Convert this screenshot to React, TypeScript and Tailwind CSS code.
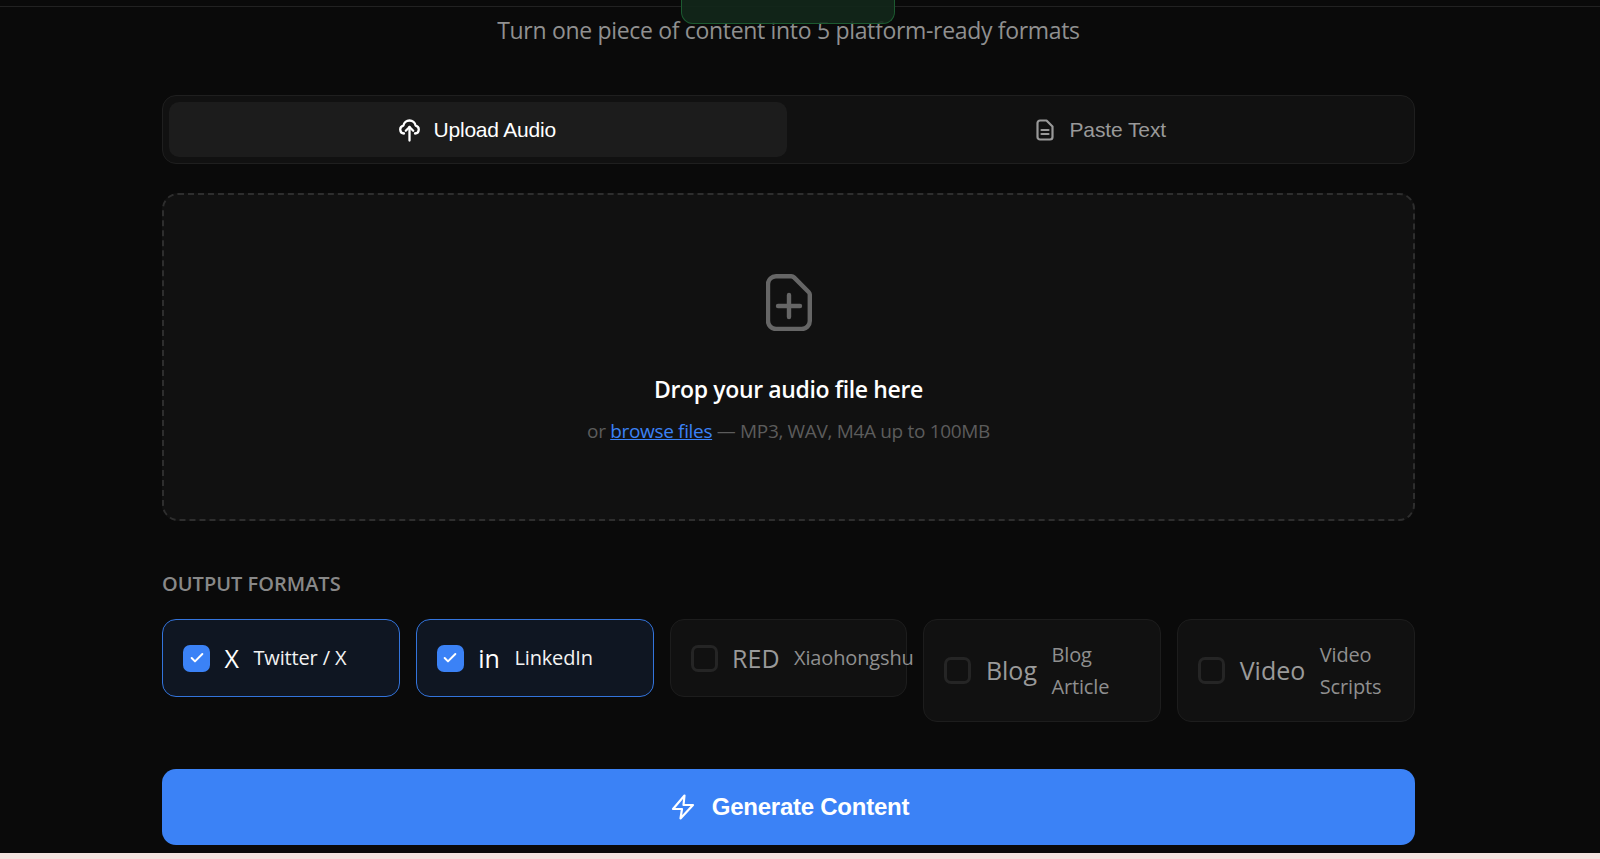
import { Check } from "lucide-react";

const sans = "font-['Open_Sans','Noto_Sans',sans-serif]";
const arial = "font-['Liberation_Sans',Arial,sans-serif]";

type Format = { short: string; name: string; on: boolean };

const formats: Format[] = [
  { short: "X", name: "Twitter / X", on: true },
  { short: "in", name: "LinkedIn", on: true },
  { short: "RED", name: "Xiaohongshu", on: false },
  { short: "Blog", name: "Blog\nArticle", on: false },
  { short: "Video", name: "Video\nScripts", on: false },
];

function UploadIcon() {
  return (
    <svg width="21" height="24" viewBox="0 0 21 24" fill="none" stroke="#fff" strokeWidth="2.3" strokeLinecap="round" strokeLinejoin="round">
      <path d="M5 15.5a4 4 0 0 1-.6-7.9 6.2 6.2 0 0 1 12.2 0A4 4 0 0 1 16 15.5" />
      <path d="M10.5 22.5V9" />
      <path d="M6.8 12.7l3.7-3.7 3.7 3.7" />
    </svg>
  );
}

function PasteIcon() {
  return (
    <svg width="18" height="22" viewBox="0 0 18 22" fill="none" stroke="#999" strokeWidth="2.2" strokeLinecap="round" strokeLinejoin="round">
      <path d="M4 1.5h6.5L16.5 7.5V18a2.5 2.5 0 0 1-2.5 2.5H4A2.5 2.5 0 0 1 1.5 18V4A2.5 2.5 0 0 1 4 1.5Z" />
      <path d="M5.5 11h7" />
      <path d="M5.5 15h7" />
    </svg>
  );
}

function FileAddIcon() {
  return (
    <svg width="46" height="57" viewBox="0 0 46 57" fill="none" stroke="#666" strokeWidth="4.4" strokeLinecap="round" strokeLinejoin="round">
      <path d="M10 2.2h15a4 4 0 0 1 3 1.2L42.6 18a4 4 0 0 1 1.2 3v26a8 8 0 0 1-8 8H10a8 8 0 0 1-8-8V10a8 8 0 0 1 8-7.8Z" />
      <path d="M23 21v22" />
      <path d="M12 32h22" />
    </svg>
  );
}

function BoltIcon() {
  return (
    <svg width="24" height="26" viewBox="0 0 24 26" fill="none" stroke="#fff" strokeWidth="2.2" strokeLinecap="round" strokeLinejoin="round">
      <path d="M13.5 1.5 2 15h9l-1.5 9.5L22 11h-9.5l1-9.5Z" />
    </svg>
  );
}

function FormatCard({ format }: { format: Format }) {
  return (
    <div
      className={`flex items-center gap-[14.5px] rounded-[14px] border px-5 py-[18.5px] ${
        format.on ? "border-[#3374dc] bg-[#0f1622]" : "border-[#1d1d1d] bg-[#111111]"
      }`}
    >
      <span
        className={`flex h-[27px] w-[27px] shrink-0 items-center justify-center rounded-[7px] ${
          format.on ? "bg-[#3b82f6]" : "border-[3px] border-[#252525]"
        }`}
      >
        {format.on && <Check className="h-4 w-4 text-white" strokeWidth={3} />}
      </span>
      <span className={`text-[25px] leading-[39px] ${format.on ? "text-white" : "text-[#9a9a9a]"}`}>{format.short}</span>
      <span
        className={`whitespace-pre-line text-[20px] leading-[32px] tracking-[-0.15px] ${
          format.on ? "text-[#f2f2f2]" : "text-[#8f8f8f]"
        }`}
      >
        {format.name}
      </span>
    </div>
  );
}

export default function App() {
  return (
    <div className={`relative flex h-[859px] flex-col overflow-hidden bg-[#0a0a0a] ${sans}`}>
      <div className="h-[7px] shrink-0 border-b border-[#222222]" />
      {/* toast behind the header, only its lower edge is left */}
      <div className="absolute left-[681px] top-0 h-[24px] w-[214px] rounded-b-[12px] border border-t-0 border-[#1c5a30] bg-[#12271ae6]" />

      <main className="flex-1 pl-[162px] pr-[185px]">
        <p className="mt-[5px] text-center text-[23px] leading-[36px] tracking-[-0.32px] text-[#909090]">
          Turn one piece of content into 5 platform-ready formats
        </p>

        <div className={`mt-[47px] grid grid-cols-2 gap-1 rounded-[14px] border border-[#1f1f1f] bg-[#111111] p-[6px] ${arial}`}>
          <button className="flex h-[55px] items-center justify-center gap-[13px] rounded-[10px] bg-[#1c1c1c] text-[21px] tracking-[-0.2px] text-white">
            <UploadIcon />
            Upload Audio
          </button>
          <button className="flex h-[55px] items-center justify-center gap-[15px] rounded-[10px] pl-[4px] text-[21px] tracking-[-0.1px] text-[#999999]">
            <PasteIcon />
            Paste Text
          </button>
        </div>

        <div className="mt-[29px] flex h-[328px] flex-col items-center rounded-[16px] border-2 border-dashed border-[#2e2e2e] bg-[#111111] pt-[79px]">
          <FileAddIcon />
          <h2 className="mt-[40px] text-[23px] font-semibold leading-[36px] tracking-[-0.37px] text-white">Drop your audio file here</h2>
          <p className="mt-[7px] text-[19px] leading-[34px] tracking-[-0.33px] text-[#5c5c5c]">
            or <a className="text-[#3b82f6] underline">browse files</a> — MP3, WAV, M4A up to 100MB
          </p>
        </div>

        <div className="mt-[49px] text-[20px] font-semibold uppercase leading-[28px] text-[#888888]">Output Formats</div>

        <div className="mt-[21px] grid grid-cols-5 items-start gap-4">
          {formats.map((f) => (
            <FormatCard key={f.short} format={f} />
          ))}
        </div>

        <button className="mt-[47px] flex h-[76px] w-full items-center justify-center gap-[17px] rounded-[14px] bg-[#3b82f6] pl-[3px] text-white">
          <BoltIcon />
          <span className={`${arial} text-[24px] font-bold tracking-[-0.25px]`}>Generate Content</span>
        </button>
      </main>

      <div className="h-[6px] shrink-0 bg-[#f3e3df]" />
    </div>
  );
}
